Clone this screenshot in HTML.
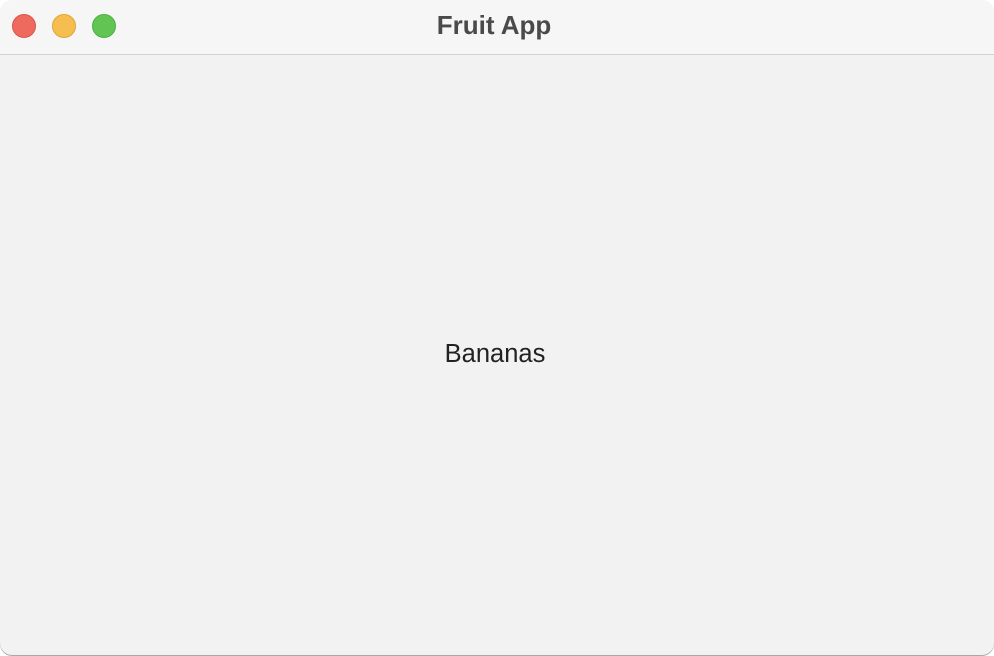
<!DOCTYPE html>
<html><head><style>
html,body{margin:0;padding:0;background:#fff;}
.win{position:absolute;left:0;top:0;width:994px;height:655px;border-radius:12px;overflow:hidden;background:#f2f2f2;box-shadow:0 1px 0 #a8a8a8;}
.bar{position:absolute;left:0;top:0;width:994px;height:54px;background:#f6f6f6;border-bottom:1px solid #d2d2d2;}
.dot{position:absolute;top:14px;width:24px;height:24px;border-radius:50%;box-sizing:border-box;}
.title{position:absolute;left:-3px;width:994px;top:10px;text-align:center;font:bold 26px "Liberation Sans",sans-serif;color:#4a4a4a;}
.txt{position:absolute;left:-2px;width:994px;top:340px;text-align:center;font:25.5px "Liberation Sans",sans-serif;color:#222;}
</style></head><body>
<div class="win">
<div class="bar">
<div class="dot" style="left:12px;background:#ee6a5e;border:1px solid #d8564b"></div>
<div class="dot" style="left:52px;background:#f6be4f;border:1px solid #dea53a"></div>
<div class="dot" style="left:92px;background:#61c554;border:1px solid #4fad43"></div>
<div class="title">Fruit App</div>
</div>
<div class="txt">Bananas</div>
</div>
</body></html>
